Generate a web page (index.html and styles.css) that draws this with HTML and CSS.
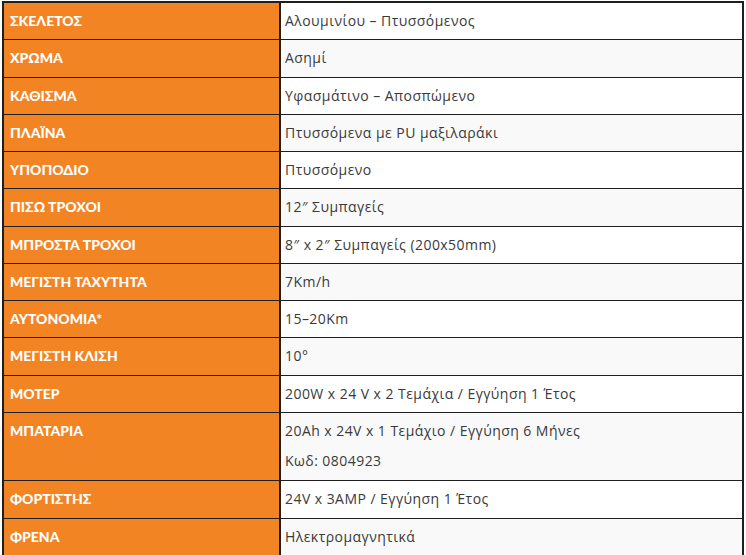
FILE: index.html
```html
<!DOCTYPE html>
<html lang="el">
<head>
<meta charset="utf-8">
<title>Specs</title>
<link rel="stylesheet" href="styles.css">
</head>
<body>
<table class="specs">
  <tbody>
    <tr><th>ΣΚΕΛΕΤΟΣ</th><td>Αλουμινίου – Πτυσσόμενος</td></tr>
    <tr><th>ΧΡΩΜΑ</th><td>Ασημί</td></tr>
    <tr><th>ΚΑΘΙΣΜΑ</th><td>Υφασμάτινο – Αποσπώμενο</td></tr>
    <tr><th>ΠΛΑΪΝΑ</th><td>Πτυσσόμενα με PU μαξιλαράκι</td></tr>
    <tr><th>ΥΠΟΠΟΔΙΟ</th><td>Πτυσσόμενο</td></tr>
    <tr><th>ΠΙΣΩ ΤΡΟΧΟΙ</th><td>12″ Συμπαγείς</td></tr>
    <tr><th>ΜΠΡΟΣΤΑ ΤΡΟΧΟΙ</th><td>8″ x 2″ Συμπαγείς (200x50mm)</td></tr>
    <tr><th>ΜΕΓΙΣΤΗ ΤΑΧΥΤΗΤΑ</th><td>7Km/h</td></tr>
    <tr><th>ΑΥΤΟΝΟΜΙΑ*</th><td>15–20Km</td></tr>
    <tr><th>ΜΕΓΙΣΤΗ ΚΛΙΣΗ</th><td>10°</td></tr>
    <tr><th>ΜΟΤΕΡ</th><td>200W x 24 V x 2 Τεμάχια / Εγγύηση 1 Έτος</td></tr>
    <tr><th>ΜΠΑΤΑΡΙΑ</th><td class="multi"><p>20Ah x 24V x 1 Τεμάχιο / Εγγύηση 6 Μήνες</p><p>Κωδ: 0804923</p></td></tr>
    <tr><th>ΦΟΡΤΙΣΤΗΣ</th><td>24V x 3AMP / Εγγύηση 1 Έτος</td></tr>
    <tr><th>ΦΡΕΝΑ</th><td>Ηλεκτρομαγνητικά</td></tr>
  </tbody>
</table>
</body>
</html>
```
FILE: styles.css
```css
html, body {
  margin: 0;
  background: #ffffff;
}
body {
  padding: 1px 2px 0 2px;
}
.specs {
  border-collapse: collapse;
  width: 742px;
  table-layout: fixed;
  border: 2px solid #1f1f1f;
}
.specs th,
.specs td {
  border-top: 1px solid #1f1f1f;
  border-bottom: 1px solid #1f1f1f;
  border-left: 2px solid #1f1f1f;
  border-right: 2px solid #1f1f1f;
  vertical-align: top;
  text-align: left;
  line-height: 20.25px;
  padding: 8px 4px 8px 6px;
}
.specs th {
  width: 265px;
  background: #f28424;
  color: #ffffff;
  font-family: "Lato", "Open Sans", sans-serif;
  font-weight: 900;
  font-size: 14px;
}
.specs td {
  background: #ffffff;
  color: #3a3a3a;
  font-family: "Open Sans", "Noto Sans", sans-serif;
  font-size: 14px;
  letter-spacing: 0.45px;
  padding-left: 4px;
}
.specs tr:nth-child(even) td {
  background: #f9f9f9;
}
.specs td.multi {
  padding-bottom: 9px;
}
.specs td p {
  margin: 0 0 10px 0;
}
.specs td p:last-child {
  margin-bottom: 0;
}
```
